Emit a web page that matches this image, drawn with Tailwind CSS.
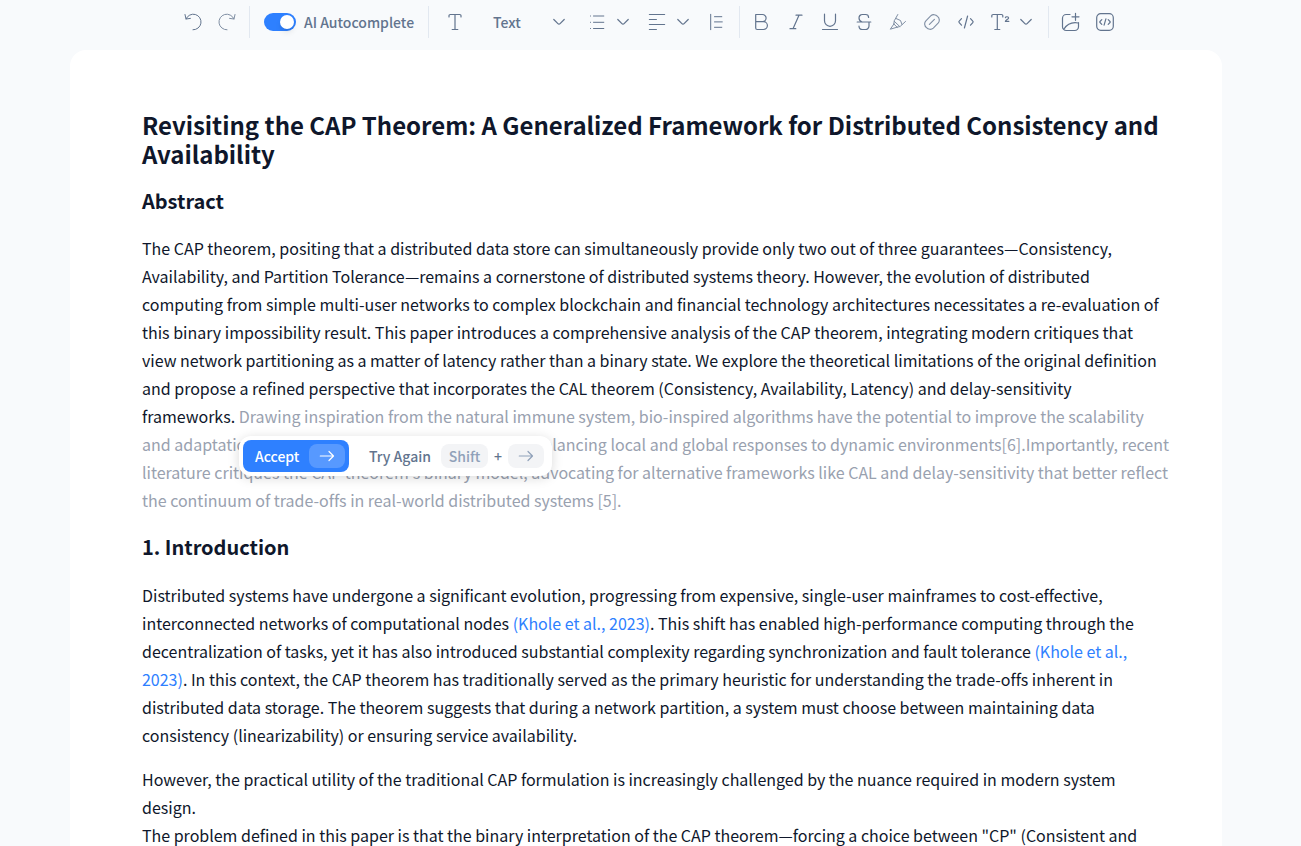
<!DOCTYPE html>
<html lang="en">

<head>
    <meta charset="UTF-8">
    <meta name="viewport" content="width=device-width, initial-scale=1.0">
    <title>Revisiting the CAP Theorem</title>
    <script src="https://cdn.jsdelivr.net/npm/@tailwindcss/browser@4"></script>
</head>

<body class="bg-slate-50 h-screen overflow-hidden font-['Noto_Sans_CJK_SC',sans-serif] text-slate-900">

    <!-- Toolbar -->
    <header class="flex items-center h-11 mb-1.5 pl-[183px] text-slate-500 text-sm font-medium whitespace-nowrap">
        <svg class="w-5 h-5 shrink-0" viewBox="0 0 20 20" fill="none" stroke="currentColor" stroke-linecap="round" stroke-linejoin="round">
            <path d="M2 2.5L3 7l4.4-.6M3 7A7.8 7.8 0 1 1 10 17.8" />
        </svg>
        <svg class="w-5 h-5 shrink-0 ml-3.5 opacity-80" viewBox="0 0 20 20" fill="none" stroke="currentColor" stroke-linecap="round" stroke-linejoin="round">
            <path d="M18 2.5L17 7l-4.4-.6M17 7A7.8 7.8 0 1 0 10 17.8" />
        </svg>

        <div class="w-px h-8 ml-3 bg-slate-200 shrink-0"></div>

        <div class="flex items-center gap-2 ml-3.5 w-[150px] shrink-0">
            <span class="flex justify-end items-center w-8 h-[18px] px-0.5 rounded-full bg-[#2e80ff] shrink-0">
                <span class="w-3.5 h-3.5 rounded-full bg-white shadow-md"></span>
            </span>
            <span>AI Autocomplete</span>
        </div>

        <div class="w-px h-8 ml-3.5 bg-slate-200 shrink-0"></div>

        <svg class="w-5 h-5 shrink-0 ml-4" viewBox="0 0 20 20" fill="none" stroke="currentColor" stroke-width="1.2" stroke-linecap="round" stroke-linejoin="round">
            <path d="M4 5V3.8A1.3 1.3 0 0 1 5.3 2.5h9.4A1.3 1.3 0 0 1 16 3.8V5M10 2.5v15M7.2 17.5h5.6" />
        </svg>
        <span class="ml-7 w-[60px] shrink-0">Text</span>
        <svg class="w-3 h-3 shrink-0" viewBox="0 0 12 12" fill="none" stroke="currentColor" stroke-width="1.2" stroke-linecap="round">
            <path d="M.8 3.5l4.1 4.1a1.5 1.5 0 0 0 2.2 0l4.1-4.1" />
        </svg>
        <svg class="w-5 h-5 shrink-0 ml-[22px]" viewBox="0 0 20 20" fill="none" stroke="currentColor" stroke-linecap="round">
            <path d="M6.5 4h10.3M6.5 10.3h10.3M6.5 16.5h10.3M3.5 4h.1M3.5 10.3h.1M3.5 16.5h.1" />
        </svg>
        <svg class="w-3 h-3 shrink-0 ml-2.5" viewBox="0 0 12 12" fill="none" stroke="currentColor" stroke-width="1.2" stroke-linecap="round">
            <path d="M.8 3.5l4.1 4.1a1.5 1.5 0 0 0 2.2 0l4.1-4.1" />
        </svg>
        <svg class="w-5 h-5 shrink-0 ml-[18px]" viewBox="0 0 20 20" fill="none" stroke="currentColor" stroke-width="1.2" stroke-linecap="round">
            <path d="M2.4 2.5h15.2M2.4 7.5h7M2.4 12.5h15.2M2.4 17.5h7" />
        </svg>
        <svg class="w-3 h-3 shrink-0 ml-2.5" viewBox="0 0 12 12" fill="none" stroke="currentColor" stroke-width="1.2" stroke-linecap="round">
            <path d="M.8 3.5l4.1 4.1a1.5 1.5 0 0 0 2.2 0l4.1-4.1" />
        </svg>
        <svg class="w-5 h-5 shrink-0 ml-[17px]" viewBox="0 0 20 20" fill="none" stroke="currentColor" stroke-linecap="round">
            <path d="M4.7 2.3v15.4M8.5 4.7h7.3M8.5 9.9h7.8M8.5 15.3h7.3" />
        </svg>

        <div class="w-px h-8 ml-[13px] bg-slate-200 shrink-0"></div>

        <div class="flex items-center gap-3.5 ml-3 shrink-0">
            <svg class="w-5 h-5" viewBox="0 0 20 20" fill="none" stroke="currentColor" stroke-width="1.2" stroke-linejoin="round">
                <path d="M3.7 2.5h6.8a3.6 3.6 0 0 1 0 7.2H3.7zM3.7 9.7h7.8a3.9 3.9 0 0 1 0 7.8H5.2a1.5 1.5 0 0 1-1.5-1.5z" />
            </svg>
            <svg class="w-5 h-5" viewBox="0 0 20 20" fill="none" stroke="currentColor" stroke-width="1.2" stroke-linecap="round">
                <path d="M10 3.2h6M4 16.7h5.8M13 3.2L7 16.7" />
            </svg>
            <svg class="w-5 h-5" viewBox="0 0 20 20" fill="none" stroke="currentColor" stroke-width="1.2" stroke-linecap="round">
                <path d="M4.5 2.2v6.6a5.5 5.5 0 0 0 11 0V2.2M2.5 17.5h15" />
            </svg>
            <svg class="w-5 h-5" viewBox="0 0 20 20" fill="none" stroke="currentColor" stroke-width="1.2" stroke-linecap="round">
                <path d="M14.6 5.4a3 3 0 0 0-3-2.9H8.4a3.4 3.4 0 0 0-3.4 3.4c0 2 1.2 3.2 3 4.1M3.2 10h13.6M15 10v4a3.5 3.5 0 0 1-3.5 3.5h-3A3.5 3.5 0 0 1 5 14.2" />
            </svg>
            <svg class="w-5 h-5 opacity-80" viewBox="0 0 20 20" fill="none" stroke="currentColor" stroke-linecap="round" stroke-linejoin="round">
                <path d="M9.8 2.5L6.4 8.6a2.5 2.5 0 0 0-.3 1.2l-.2 2.2M17.5 9.5l-5 4.6a2.5 2.5 0 0 1-1.2.6l-2.2.5M6.2 9.2l5.6 5.4M5.9 12l3.2 3.2M5.9 12l-3.6 5.2 6.8-2M8 6.5l4.5 2 1.5 4" />
            </svg>
            <svg class="w-5 h-5 opacity-80" viewBox="0 0 20 20" fill="none" stroke="currentColor" stroke-width="1.1" stroke-linecap="round" stroke-linejoin="round">
                <path d="M4.5 15.6a4.6 4.6 0 0 1-.6-6.8l4.8-4.9a4.7 4.7 0 0 1 6.8.5 4.7 4.7 0 0 1 .6 6.8l-4.8 4.9a4.7 4.7 0 0 1-6.8-.5zM7.4 12.4l5-5" />
            </svg>
            <svg class="w-5 h-5" viewBox="0 0 20 20" fill="none" stroke="currentColor" stroke-width="1.2" stroke-linecap="round" stroke-linejoin="round">
                <path d="M5.5 6.6L3.2 9.2a1 1 0 0 0 0 1.4l2.3 2.6M14.5 6.6l2.3 2.6a1 1 0 0 1 0 1.4l-2.3 2.6M11.6 4L8.4 16" />
            </svg>
            <svg class="w-5 h-5" viewBox="0 0 20 20" fill="none" stroke="currentColor" stroke-width="1.2" stroke-linecap="round" stroke-linejoin="round">
                <path d="M1.8 5V3.8A1.3 1.3 0 0 1 3.1 2.5h8.4A1.3 1.3 0 0 1 12.8 3.8V5M7.3 2.5v15M4.8 17.5h5M15.4 5.6c.2-1.2 3.2-1.1 3.2.3 0 1.2-3.2 2-3.2 3.5h3.4" />
            </svg>
        </div>
        <svg class="w-3 h-3 shrink-0 ml-2.5" viewBox="0 0 12 12" fill="none" stroke="currentColor" stroke-width="1.2" stroke-linecap="round">
            <path d="M.8 3.5l4.1 4.1a1.5 1.5 0 0 0 2.2 0l4.1-4.1" />
        </svg>

        <div class="w-px h-8 ml-4 bg-slate-200 shrink-0"></div>

        <svg class="w-5 h-5 shrink-0 ml-3" viewBox="0 0 20 20" fill="none" stroke="currentColor" stroke-width="1.2" stroke-linecap="round" stroke-linejoin="round">
            <path d="M9 2.5H5.2a3.7 3.7 0 0 0-3.7 3.7v8.6a3.7 3.7 0 0 0 3.7 3.7h8.6a3.7 3.7 0 0 0 3.7-3.7V10.5M11 4.8h7M14.5 1.3v7M3 17c2.5-4 7.5-7.2 14.3-6" />
        </svg>
        <svg class="w-5 h-5 shrink-0 ml-3.5" viewBox="0 0 20 20" fill="none" stroke="currentColor" stroke-width="1.2" stroke-linecap="round" stroke-linejoin="round">
            <rect x="1.7" y="1.7" width="16.6" height="16.6" rx="4" />
            <path d="M6.8 7.7L5 9.5a.7.7 0 0 0 0 1l1.8 1.8M13.2 7.7L15 9.5a.7.7 0 0 1 0 1l-1.8 1.8M10.9 6.8l-1.8 6.4" />
        </svg>
    </header>

    <!-- Document page -->
    <main class="relative w-[1152px] h-[796px] overflow-hidden ml-[70px] pt-[60px] px-[72px] bg-white rounded-t-2xl whitespace-nowrap tracking-[-0.008px]">
        <h1 class="text-2xl leading-[29px] font-bold tracking-[-0.02px]">Revisiting the CAP Theorem: A Generalized Framework for Distributed Consistency and<br>Availability</h1>

        <h2 class="mt-5 text-xl leading-[26px] font-bold">Abstract</h2>

        <p class="mt-5 text-base leading-7">
            The CAP theorem, positing that a distributed data store can simultaneously provide only two out of three guarantees—Consistency,<br>
            Availability, and Partition Tolerance—remains a cornerstone of distributed systems theory. However, the evolution of distributed<br>
            computing from simple multi-user networks to complex blockchain and financial technology architectures necessitates a re-evaluation of<br>
            this binary impossibility result. This paper introduces a comprehensive analysis of the CAP theorem, integrating modern critiques that<br>
            view network partitioning as a matter of latency rather than a binary state. We explore the theoretical limitations of the original definition<br>
            and propose a refined perspective that incorporates the CAL theorem (Consistency, Availability, Latency) and delay-sensitivity<br>
            frameworks. <span class="text-gray-400">Drawing inspiration from the natural immune system, bio-inspired algorithms have the potential to improve the scalability<br>
            and adaptation of distributed computing systems by balancing local and global responses to dynamic environments[6].Importantly, recent<br>
            literature critiques the CAP theorem's binary model, advocating for alternative frameworks like CAL and delay-sensitivity that better reflect<br>
            the continuum of trade-offs in real-world distributed systems [5].</span>
        </p>

        <h2 class="mt-5 text-xl leading-[26px] font-bold">1. Introduction</h2>

        <p class="mt-[21px] text-base leading-7">
            Distributed systems have undergone a significant evolution, progressing from expensive, single-user mainframes to cost-effective,<br>
            interconnected networks of computational nodes <a class="text-[#2e80ff]">(Khole et al., 2023)</a>. This shift has enabled high-performance computing through the<br>
            decentralization of tasks, yet it has also introduced substantial complexity regarding synchronization and fault tolerance <a class="text-[#2e80ff]">(Khole et al.,<br>
            2023)</a>. In this context, the CAP theorem has traditionally served as the primary heuristic for understanding the trade-offs inherent in<br>
            distributed data storage. The theorem suggests that during a network partition, a system must choose between maintaining data<br>
            consistency (linearizability) or ensuring service availability.
        </p>

        <p class="mt-4 text-base leading-7">
            However, the practical utility of the traditional CAP formulation is increasingly challenged by the nuance required in modern system<br>
            design.<br>
            The problem defined in this paper is that the binary interpretation of the CAP theorem—forcing a choice between "CP" (Consistent and
        </p>

        <!-- Autocomplete popup -->
        <div class="absolute left-[169px] top-[386px] flex items-center w-[313px] h-10 pl-1 rounded-xl bg-white text-sm font-medium text-slate-500 shadow-[0_2px_12px_rgba(0,0,0,0.15)]">
            <div class="flex items-center w-[106px] h-8 pl-3 rounded-lg bg-[#2e80ff] text-white">
                <span class="w-[54px]">Accept</span>
                <span class="flex items-center justify-center w-9 h-6 rounded-lg bg-white/20">
                    <svg class="w-4 h-4" viewBox="0 0 16 16" fill="none" stroke="currentColor" stroke-width="1.2" stroke-linecap="round" stroke-linejoin="round">
                        <path d="M1.3 8h13.2M10 3.5L14.5 8 10 12.5" />
                    </svg>
                </span>
            </div>
            <span class="ml-5 w-[72px]">Try Again</span>
            <span class="flex items-center justify-center w-[47px] h-6 rounded-lg bg-gray-100 text-slate-400">Shift</span>
            <span class="w-5 text-center">+</span>
            <span class="flex items-center justify-center w-9 h-6 rounded-lg bg-gray-100 text-slate-400">
                <svg class="w-4 h-4" viewBox="0 0 16 16" fill="none" stroke="currentColor" stroke-width="1.2" stroke-linecap="round" stroke-linejoin="round">
                    <path d="M1.3 8h13.2M10 3.5L14.5 8 10 12.5" />
                </svg>
            </span>
        </div>
    </main>

</body>

</html>
